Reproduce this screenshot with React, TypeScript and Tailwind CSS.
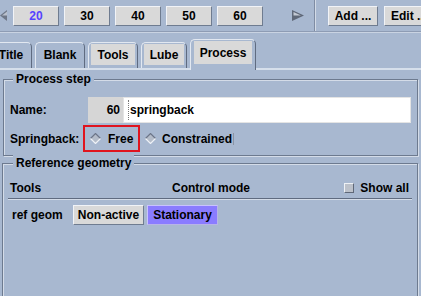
import React from "react";

function TopBtn({ children, blue = false }: { children: React.ReactNode; blue?: boolean }) {
  return (
    <div
      className={
        blue
          ? "w-[46px] h-[20px] shrink-0 flex items-center justify-center bg-[#d9d9d9] border border-t-[#f1f3f7] border-l-[#f1f3f7] border-b-[#6f7c90] border-r-[#6f7c90] text-[#5544ff]"
          : "w-[46px] h-[20px] shrink-0 flex items-center justify-center bg-[#d9d9d9] border border-t-[#f1f3f7] border-l-[#f1f3f7] border-b-[#6f7c90] border-r-[#6f7c90] text-black"
      }
    >
      {children}
    </div>
  );
}

function Diamond() {
  return (
    <svg width="11" height="11" viewBox="0 0 11 11" className="shrink-0">
      <polygon points="5.5,0.5 10.5,5.5 5.5,10.5 0.5,5.5" fill="#b4bcc9" />
      <polyline points="0.5,5.5 5.5,0.5 10.5,5.5" fill="none" stroke="#6c7588" strokeWidth="1.2" />
      <polyline points="0.5,5.5 5.5,10.5 10.5,5.5" fill="none" stroke="#eef1f6" strokeWidth="1.2" />
    </svg>
  );
}

export default function App() {
  return (
    <div className="w-[421px] h-[296px] overflow-hidden bg-[#a8b8d0] font-['Liberation_Sans',Arial,sans-serif] font-bold text-[12px] text-black leading-none">
      {/* Top bar */}
      <div className="h-[31px] flex items-center">
        <svg width="7" height="11" viewBox="0 0 7 11" className="shrink-0">
          <polygon points="0,5.5 7,0 7,11" fill="#6e7787" />
          <polygon points="2,5.5 7,1.5 7,5.5" fill="#b9c0cc" />
        </svg>
        <div className="ml-[6px] flex gap-[5px] shrink-0">
          <TopBtn blue>20</TopBtn>
          <TopBtn>30</TopBtn>
          <TopBtn>40</TopBtn>
          <TopBtn>50</TopBtn>
          <TopBtn>60</TopBtn>
        </div>
        <svg width="12" height="11" viewBox="0 0 12 11" className="ml-[29px] shrink-0">
          <polygon points="0,0 12,5.5 0,11" fill="#5f6878" />
          <polygon points="1.5,2 9,5.5 1.5,5.5" fill="#c3c9d3" />
        </svg>
        <div className="ml-[10px] self-stretch w-[2px] shrink-0 border-l border-l-[#7f8ca3] border-r border-r-[#d3dbe7]" />
        <div className="ml-[12px] w-[50px] h-[20px] shrink-0 flex items-center justify-center bg-[#d9d9d9] border border-t-[#f1f3f7] border-l-[#f1f3f7] border-b-[#6f7c90] border-r-[#6f7c90]">
          Add ...
        </div>
        <div className="ml-[6px] w-[50px] h-[20px] shrink-0 flex items-center justify-center bg-[#d9d9d9] border border-t-[#f1f3f7] border-l-[#f1f3f7] border-b-[#6f7c90] border-r-[#6f7c90]">
          Edit ...
        </div>
      </div>
      <div className="h-px bg-[#8e9cb4]" />
      <div className="h-px bg-[#c9d3e2]" />

      {/* Tabs */}
      <div className="h-[37px] flex items-end gap-[3px] border-b-2 border-b-[#d6dfeb]">
        <div className="-ml-[10px] w-[42px] h-[26px] shrink-0 rounded-t-[5px] border-l border-t border-r border-l-[#e2e8f1] border-t-[#e2e8f1] border-r-[#5f6b80] px-[2px] pt-[1px] pb-[3px] flex">
          <div className="flex-1 flex items-center justify-center">Title</div>
        </div>
        <div className="w-[50px] h-[26px] shrink-0 rounded-t-[5px] border-l border-t border-r border-l-[#e2e8f1] border-t-[#e2e8f1] border-r-[#5f6b80] px-[2px] pt-[1px] pb-[3px] flex">
          <div className="flex-1 flex items-center justify-center">Blank</div>
        </div>
        <div className="w-[50px] h-[26px] shrink-0 rounded-t-[5px] border-l border-t border-r border-l-[#e2e8f1] border-t-[#e2e8f1] border-r-[#5f6b80] px-[2px] pt-[1px] pb-[3px] flex">
          <div className="flex-1 flex items-center justify-center bg-[#d9d9d9]">Tools</div>
        </div>
        <div className="w-[46px] h-[26px] shrink-0 rounded-t-[5px] border-l border-t border-r border-l-[#e2e8f1] border-t-[#e2e8f1] border-r-[#5f6b80] px-[2px] pt-[1px] pb-[3px] flex">
          <div className="flex-1 flex items-center justify-center bg-[#d9d9d9]">Lube</div>
        </div>
        <div className="relative z-10 -mb-[2px] w-[66px] h-[31px] shrink-0 rounded-t-[5px] bg-[#a8b8d0] border-l border-t border-r border-l-[#e2e8f1] border-t-[#e2e8f1] border-r-[#5f6b80] px-[3px] pt-[1px] pb-[6px] flex">
          <div className="flex-1 flex items-center justify-center bg-[#d9d9d9]">Process</div>
        </div>
      </div>

      {/* Process step */}
      <div className="mx-[3px] mt-[9px] h-[77px] border border-[#6d7a8f] shadow-[inset_1px_1px_0_#d4dce8,1px_1px_0_#d4dce8] px-[6px]">
        <div className="-mt-[9px] ml-[3px] w-fit px-[3px] bg-[#a8b8d0] leading-[16px]">Process step</div>
        <div className="mt-[10px] h-[26px] flex items-stretch">
          <div className="w-[78px] shrink-0 flex items-center">Name:</div>
          <div className="w-[35px] shrink-0 bg-[#d6d6d6] flex items-center justify-end pr-[3px]">60</div>
          <div className="flex-1 bg-white border border-[#e4e4e4] flex items-center pl-[4px]">
            <span className="h-[20px] border-l border-dotted border-l-[#777]" />
            <span className="ml-px font-bold">springback</span>
          </div>
        </div>
        <div className="mt-[2px] h-[27px] flex items-center">
          <div className="w-[73px] shrink-0">Springback:</div>
          <div className="w-[57px] h-[27px] shrink-0 border-2 border-[#e0141e] flex items-center pl-[5px]">
            <Diamond />
            <span className="ml-[7px]">Free</span>
          </div>
          <div className="ml-[5px]">
            <Diamond />
          </div>
          <span className="ml-[6px]">Constrained</span>
          <span className="ml-px h-[12px] w-px bg-[#8a93a3]" />
        </div>
      </div>

      {/* Reference geometry */}
      <div className="ml-[2px] mr-[3px] mt-[7px] h-[160px] border border-[#6d7a8f] shadow-[inset_1px_1px_0_#d4dce8,1px_1px_0_#d4dce8] px-[5px]">
        <div className="-mt-[9px] ml-[5px] w-fit px-[3px] bg-[#a8b8d0] leading-[16px]">Reference geometry</div>
        <div className="mt-[9px] h-[16px] flex items-center pl-[2px]">
          <div className="w-[162px] shrink-0">Tools</div>
          <div>Control mode</div>
          <div className="ml-auto flex items-center pr-[3px]">
            <div className="w-[10px] h-[10px] bg-[#bcc1ca] border border-t-[#eef1f5] border-l-[#eef1f5] border-b-[#5f6878] border-r-[#5f6878]" />
            <span className="ml-[6px]">Show all</span>
          </div>
        </div>
        <div className="mt-[2px] h-px bg-[#5f6b80]" />
        <div className="h-px bg-[#d4dce8]" />
        <div className="mt-[5px] h-[20px] flex items-center pl-[4px]">
          <div className="w-[61px] shrink-0">ref geom</div>
          <div className="w-[71px] h-[20px] shrink-0 flex items-center justify-center bg-[#d9d9d9] border border-t-[#f1f3f7] border-l-[#f1f3f7] border-b-[#6f7c90] border-r-[#6f7c90]">
            Non-active
          </div>
          <div className="ml-[3px] w-[71px] h-[20px] shrink-0 flex items-center justify-center bg-[#8a7cff] border border-t-[#c9c2ff] border-l-[#c9c2ff] border-b-[#b8b4e6] border-r-[#b8b4e6]">
            Stationary
          </div>
        </div>
      </div>
    </div>
  );
}
